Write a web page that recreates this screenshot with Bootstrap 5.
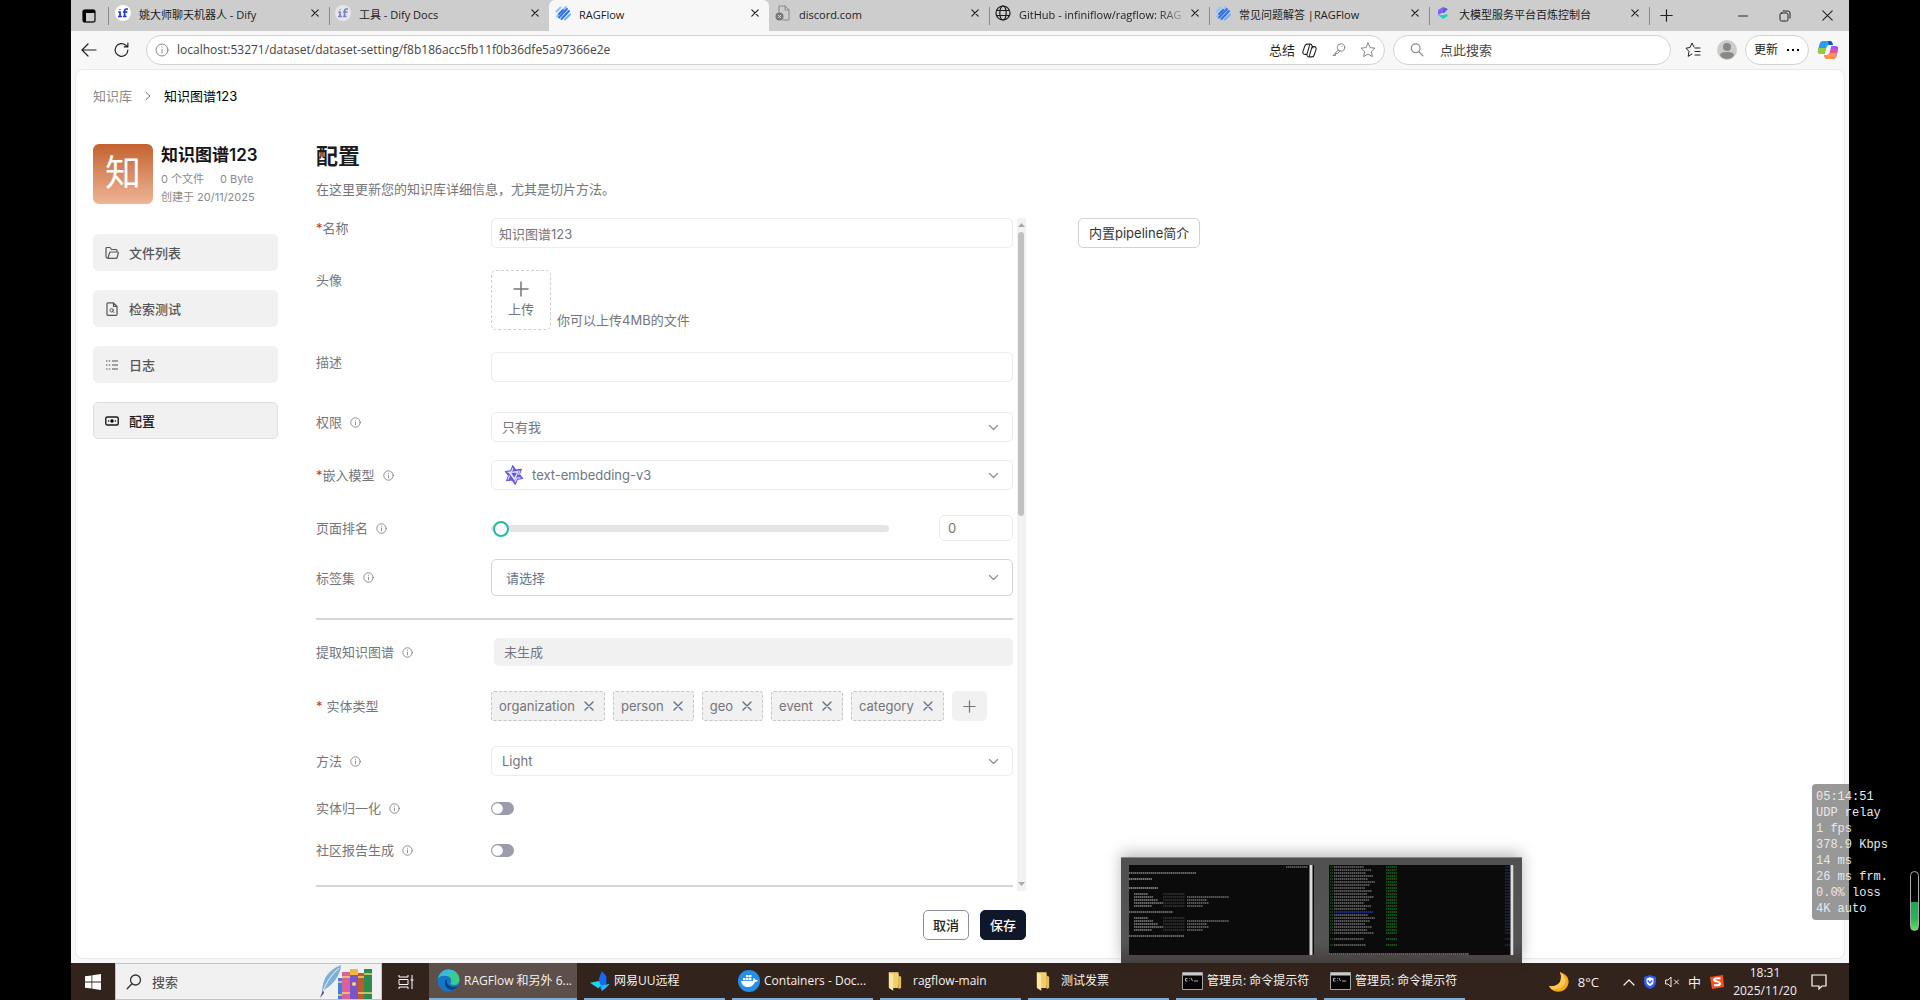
<!DOCTYPE html>
<html lang="zh-CN">
<head>
<meta charset="utf-8">
<meta name="viewport" content="width=device-width, initial-scale=1">
<title>RAGFlow</title>
<link rel="stylesheet" href="https://cdn.jsdelivr.net/npm/bootstrap@5.3.0/dist/css/bootstrap.min.css">
<style>
:root{--ui:"Open Sans","Noto Sans CJK SC",sans-serif;--app:Inter,"Noto Sans CJK SC",sans-serif;--soft:#e9ecf0;--txt:#75757a}
body{background:#000;font-family:var(--ui);font-size:12px;line-height:20px;color:#222}
.desk{margin:0 71px;min-height:100vh;background:#f7f7f7;position:relative}
svg{flex:none;display:block}
.ln{fill:none;stroke:currentColor;stroke-linecap:round;stroke-linejoin:round}
button{color:inherit;font:inherit}
.bare{background:none;border:0;padding:0;display:flex}
/* tab strip */
.tabs{background:#cdcdcd;height:31px;font-size:11px}
.tab{width:220px;height:31px;padding:0 10px 6px 6px;color:#1c1c1c;min-width:0;position:relative;flex:0 1 220px}
.tab+.tab:not(.on):not(.after)::before{content:"";position:absolute;left:0;top:7px;width:1px;height:18px;background:#888}
.tab a{color:inherit;text-decoration:none;overflow:hidden;white-space:nowrap}
.tab.on{background:#f7f7f7;border-radius:6px 6px 0 0}
.tab.fade-end a{-webkit-mask-image:linear-gradient(90deg,#000 85%,#0003);mask-image:linear-gradient(90deg,#000 85%,#0003)}
.lead-ic{width:38px;height:18px;padding-left:11px;border-right:1px solid #888;flex:none}
.newtab{height:18px;border-left:1px solid #888;padding-left:10px}
.wincap{gap:31px;padding-right:16px}
/* toolbar */
.bar{height:38px;padding:4px 10px}
.gap6{gap:6px}.gap10{gap:10px}
.pill{border:1px solid #d2d2d2;border-radius:15px;background:#fff;height:30px}
.pill input{border:0;background:none;outline:0;padding:0;color:#444;min-width:0}
.quick{width:278px}
.mute{color:#888}
.fs13{font-size:13px}
.keyic{margin:0 6px}
.favb{margin:0 16px 0 14px}
/* application page */
.page{margin:0 4px;height:890px;background:#fff;border-radius:8px;border:1px solid #e9e9e9;font-family:var(--app);font-size:13px;padding:16px 18px 0 17px;color:var(--txt)}
.crumb a{color:#8a8a8e;text-decoration:none}
.side{width:185px;padding-top:38px}
.avatar{width:60px;height:60px;border-radius:6px;background:linear-gradient(#c4622f,#efb595);color:#fff;font-size:36px;line-height:58px}
.kb{font-size:17px;line-height:22px;font-weight:600;color:#151517}
.meta{font-size:11px;line-height:18px;color:#8a8a8e}
.sidenav{gap:19px;margin-top:28px}
.sidenav a{height:37px;border-radius:5px;background:#f1f1f1;color:#55555a;text-decoration:none;padding:0 11px;gap:10px;font-weight:500;border:1px solid #f1f1f1}
.sidenav a.on{border-color:#dcdfe0;color:#1b1b1e}
.main{padding:37px 0 0 38px;width:748px}
.main h1{font-size:22px;line-height:26px;font-weight:600;color:#1d1d20;margin:0 0 10px}
.main p{margin:0 0 19px}
.fields{width:698px}
.f{display:flex;align-items:center;margin-bottom:25px}
.f>label,.f>.lb{width:175px;flex:none;display:flex;align-items:center;gap:8px}
.f.top{align-items:flex-start}
.f.m18{margin-bottom:18px}.f.m22{margin-bottom:22px}.f.m30{margin-bottom:30px}
.req::before{content:"*";color:#d03030;margin-right:-8px}
.req.sp::before{margin-right:-4px}
.ctl{height:30px;font-size:13px;line-height:20px;border:1px solid var(--soft);border-radius:5px;padding:4px 7px;color:#75757a;background-color:#fff}
.form-select.ctl{padding:4px 10px;background-size:13px;background-position:right 12px center;background-image:url("data:image/svg+xml,%3csvg xmlns='http://www.w3.org/2000/svg' viewBox='0 0 16 16'%3e%3cpath fill='none' stroke='%2388909a' stroke-width='1.5' stroke-linecap='round' stroke-linejoin='round' d='M3 5.5l5 5 5-5'/%3e%3c/svg%3e")}
.form-select.tall{height:37px;border-color:#d2d5d8;color:#64748b;padding:7px 14px}
.form-select.withic{padding-left:40px;color:#6f7785}
.over-ic{position:absolute;left:13px;top:5px}
.upload{width:60px;height:60px;border:1px dashed #cfcfcf;border-radius:5px;flex-direction:column;align-items:center;justify-content:center;gap:2px}
.hint{margin-left:6px}
.rank{appearance:none;-webkit-appearance:none;width:398px;height:16px;background:none;margin:0}
.rank::-webkit-slider-runnable-track{height:7px;border-radius:4px;background:#e5e5e5}
.rank::-webkit-slider-thumb{-webkit-appearance:none;width:16px;height:16px;border-radius:50%;border:2px solid #25b8a9;background:#fff;margin-top:-4px;margin-left:2px}
.num{width:74px;height:26px;padding:2px 8px}
.rule{height:2px;background:#d2d5da;margin-bottom:18px}
.nogen{height:28px;border-radius:5px;background:#f1f1f1;padding:4px 10px;margin-left:3px}
.tagx{height:30px;border:1px dashed #c6c6c6;border-radius:3px;background:#f1f1f1;padding:0 10px 0 7px;gap:9px;color:#75757a}
.tagx .bare{color:#64708a}
.plus{width:35px;height:30px;background:#f1f1f1;border-radius:5px;align-items:center;justify-content:center}
.form-switch.sw{padding:0;margin:0;min-height:0;line-height:0}
.sw .form-check-input{width:23px;height:13px;margin:0;float:none;border:0;background-color:#9a9bab;background-image:url("data:image/svg+xml,%3csvg xmlns='http://www.w3.org/2000/svg' viewBox='-4 -4 8 8'%3e%3ccircle r='3.3' fill='%23fff'/%3e%3c/svg%3e")}
.track{width:9px;background:#f2f2f2;margin-left:4px;padding:5px 1px;color:#aaa}
.thumb{height:284px;width:6px;border-radius:3px;background:#c1c1c1;margin:4px 0 auto}
.acts{gap:11px;padding-top:19px}
.act{height:30px;border-radius:5px;font-size:13px;line-height:20px;padding:4px 9px;border:1px solid #8b909b;background:#fff;color:#222;font-weight:500}
.act.dark{background:#0f172a;border-color:#0f172a;color:#fff}
.act.intro{border-color:#d2d2d2;color:#333;font-weight:400;padding:4px 10px;margin:112px 0 0 52px}
/* taskbar */
.task{height:37px;background:#32241d;color:#f4f1ef;margin-top:4px}
.startb{width:44px;height:37px;align-items:center;justify-content:center}
.find{width:267px;height:37px;background:#f1f1f1;border:1px solid #c4c4c4;padding-left:10px;gap:10px;color:#333}
.find input{border:0;background:none;outline:0;width:135px;font-size:13px;color:#333;padding:0}
.find input::placeholder,.pill input::placeholder{color:#444;opacity:1}
.viewb{width:47px;align-items:center;justify-content:center}
.app{width:141px;height:37px;border-bottom:2px solid #7ab0e0;gap:4px;align-items:center;padding:0 6px;white-space:nowrap}
.app.on{width:148px;background:#5d504a;padding-left:8px}
.apps{gap:7px}
.app.dirb{padding-left:8px;gap:11px}
.tray{padding-right:22px}
.clock{line-height:18px;text-align:center;width:64px;margin-right:14px}
/* layers over the desktop */
.peek{position:absolute;left:1050px;top:857px;width:401px;height:106px;background:linear-gradient(#505050,#555 80%,#44403e);border-top:1px solid #888;padding:7px 8px;box-shadow:0 -4px 14px #0004;gap:15px}
.stats{position:absolute;right:0;top:784px;width:37px;height:136px;background:#989898;border-radius:4px 0 0 4px;color:#e8e8e8;font:12px/16px "Liberation Mono",monospace;padding:5px 4px;white-space:pre}
.gauge{position:absolute;left:1910px;top:871px;width:9px;height:60px;border:1px solid #aaa;border-radius:5px;background:linear-gradient(transparent 52%,#18a850 52%,#26b556 80%,#62e05c)}
</style>
</head>
<body>
<svg width="0" height="0" class="position-absolute">
<symbol id="x" viewBox="0 0 10 10"><path class="ln" d="M1 1l8 8M9 1L1 9" stroke-width="1.4"/></symbol>
<symbol id="i" viewBox="0 0 14 14"><circle class="ln" cx="7" cy="7" r="6"/><path class="ln" d="M7 6.5V10M7 4v.2"/></symbol>
<symbol id="pl" viewBox="0 0 16 16"><path class="ln" d="M8 1v14M1 8h14" stroke-width="1.5"/></symbol>
<symbol id="rag" viewBox="0 0 16 16"><g stroke-linecap="round" stroke-width="2" fill="none"><path d="M1.500 6.500l4-4M2 11.500L11 2" stroke="#8fc2f8"/><path d="M4 12.500l8-8.500M6.500 14L14 6" stroke="#2f6fe4"/><path d="M10 14.500l5-5" stroke="#6db0f8"/><path d="M4 9l4-4" stroke="#2f6fe4"/></g></symbol>
<symbol id="dify" viewBox="0 0 16 16"><circle cx="8" cy="8" r="8" fill="#fff"/><path d="M5 4.2v.8M3.300 7H5v4.300M3 11.500h4M13 4h-1.600Q9.600 4 9.600 6v5.500M8 7h4.500M8 11.500h3.500" fill="none" stroke="#1f35e0" stroke-width="1.700"/></symbol>
<symbol id="mag" viewBox="0 0 16 16"><circle class="ln" cx="9.500" cy="6" r="5" stroke-width="1.300"/><path class="ln" d="M6 9.700L1.200 14.800" stroke-width="1.300"/></symbol>
<symbol id="magr" viewBox="0 0 16 16"><circle class="ln" cx="6.500" cy="6" r="5" stroke-width="1.300"/><path class="ln" d="M10 9.700l4.800 5.100" stroke-width="1.300"/></symbol>
<symbol id="dir" viewBox="0 0 16 22"><path d="M1 1h11v15H1z" fill="#f4d376"/><path d="M12 5l3 1v13l-3 1z" fill="#e8bd52"/><path d="M5 3h7v16H5z" fill="#f2cd68"/><path d="M1 1l5 3v18l-5-3z" fill="#fbe6a2"/></symbol>
<symbol id="cmd" viewBox="0 0 21 18"><path d="M.5.500h20v17H.5z" fill="#050505" stroke="#a5a5a5"/><path d="M1 1h19v2.500H1z" fill="#ccc"/><path d="M5.500 6.500H3.500v2.500h2M7.500 6.500v.5M7.500 8.500V9M9 6l1.500 3M12 9h4" fill="none" stroke="#ddd" stroke-width=".8"/></symbol>
<symbol id="cop" viewBox="0 0 20 20"><g class="ln" stroke-width="1.300"><path d="M7 2.500h4c1.200 0 1.700.8 2 2L14 7M7 2.500c-1.500 0-2.200 1-2.600 2.500L2.300 11c-.5 2 .3 3.500 2.200 3.500H7L10 4M13 17.500H9c-1.200 0-1.700-.8-2-2l-.3-1M13 17.500c1.500 0 2.200-1 2.600-2.500L17.700 9c.5-2-.3-3.500-2.200-3.500H13L10 16"/></g></symbol>
</svg>
<div class="desk d-flex flex-column">
  <nav class="tabs d-flex align-items-center">
    <button class="lead-ic bare align-items-center" aria-label="标签页操作"><svg width="14" height="14" viewBox="0 0 14 14"><rect class="ln" x="1" y="1" width="12" height="12" rx="2" stroke-width="1.400"/><path d="M1 1h12v3H1zM1 3h3v10H1z"/></svg></button>
    <div class="d-flex flex-grow-1 align-items-center">
    <div class="tab d-flex align-items-end gap-2"><svg width="16" height="16" class="mb-1"><use href="#dify"/></svg><a href="#" class="flex-grow-1">姚大师聊天机器人 - Dify</a><button class="bare mb-1 pb-1" aria-label="关闭"><svg width="8" height="8"><use href="#x"/></svg></button></div>
    <div class="tab d-flex align-items-end gap-2"><svg width="16" height="16" class="mb-1" opacity=".5"><use href="#dify"/></svg><a href="#" class="flex-grow-1">工具 - Dify Docs</a><button class="bare mb-1 pb-1" aria-label="关闭"><svg width="8" height="8"><use href="#x"/></svg></button></div>
    <div class="tab on d-flex align-items-end gap-2"><svg width="16" height="16" class="mb-1"><use href="#rag"/></svg><a href="#" class="flex-grow-1">RAGFlow</a><button class="bare mb-1 pb-1" aria-label="关闭"><svg width="8" height="8"><use href="#x"/></svg></button></div>
    <div class="tab after d-flex align-items-end gap-2"><svg width="16" height="16" class="mb-1 mute" viewBox="0 0 16 16"><path class="ln" d="M4 7V1h6l4 4v10H8M10 1v4h4"/><circle cx="4.500" cy="11.500" r="4" fill="#777"/><path d="M3 10l3 3M6 10l-3 3" stroke="#ddd"/></svg><a href="#" class="flex-grow-1">discord.com</a><button class="bare mb-1 pb-1" aria-label="关闭"><svg width="8" height="8"><use href="#x"/></svg></button></div>
    <div class="tab fade-end d-flex align-items-end gap-2"><svg width="16" height="16" class="mb-1" viewBox="0 0 16 16"><g class="ln" stroke-width="1.200"><circle cx="8" cy="8" r="7"/><ellipse cx="8" cy="8" rx="3.200" ry="7"/><path d="M1.500 5.500h13M1.500 10.500h13"/></g></svg><a href="#" class="flex-grow-1">GitHub - infiniflow/ragflow: RAG</a><button class="bare mb-1 pb-1" aria-label="关闭"><svg width="8" height="8"><use href="#x"/></svg></button></div>
    <div class="tab d-flex align-items-end gap-2"><svg width="16" height="16" class="mb-1"><use href="#rag"/></svg><a href="#" class="flex-grow-1">常见问题解答 |RAGFlow</a><button class="bare mb-1 pb-1" aria-label="关闭"><svg width="8" height="8"><use href="#x"/></svg></button></div>
    <div class="tab d-flex align-items-end gap-2"><svg width="16" height="16" class="mb-1" viewBox="0 0 16 16"><path d="M8 2L3 5v5l4-2z" fill="#8b5cf6"/><path d="M8 2l5 2-4 4-2 0z" fill="#5a5af0"/><path d="M3 10l5 4 5-3-1-2-4 1z" fill="#22d3c5"/></svg><a href="#" class="flex-grow-1">大模型服务平台百炼控制台</a><button class="bare mb-1 pb-1" aria-label="关闭"><svg width="8" height="8"><use href="#x"/></svg></button></div>
    <button class="bare newtab align-items-center" aria-label="新建标签页"><svg width="13" height="13"><use href="#pl"/></svg></button>
    </div>
    <div class="wincap d-flex align-items-center">
      <button class="bare" aria-label="最小化"><svg width="10" height="10" viewBox="0 0 10 10"><path class="ln" d="M.5 5h9"/></svg></button>
      <button class="bare" aria-label="还原"><svg width="12" height="12" viewBox="0 0 12 12"><rect class="ln" x="1" y="3" width="8" height="8" rx="1.500"/><path class="ln" d="M4 1h5q2 0 2 2v5"/></svg></button>
      <button class="bare" aria-label="关闭窗口"><svg width="11" height="11" viewBox="0 0 10 10"><path class="ln" d="M.7.700l8.600 8.600M9.300.700L.7 9.300"/></svg></button>
    </div>
  </nav>
  <div class="bar d-flex align-items-center">
    <button class="bare" aria-label="返回"><svg width="16" height="16" viewBox="0 0 16 16"><path class="ln" d="M15 8H1M7 2L1 8l6 6" stroke-width="1.200"/></svg></button>
    <button class="bare ms-3 me-3" aria-label="刷新"><svg width="17" height="18" viewBox="0 0 16 16"><path class="ln" d="M14 8a6 6 0 1 1-2-4.500L14 5M14 1.500V5h-3.500" stroke-width="1.100"/></svg></button>
    <div class="pill d-flex align-items-center flex-grow-1 px-2 gap-2">
      <svg width="14" height="14" class="mute"><use href="#i"/></svg>
      <input class="flex-grow-1" aria-label="地址" value="localhost:53271/dataset/dataset-setting/f8b186acc5fb11f0b36dfe5a97366e2e">
      <button class="bare fs13 gap6 align-items-center">总结 <svg width="17" height="17"><use href="#cop"/></svg></button>
      <svg width="14" height="14" viewBox="0 0 14 14" class="mute keyic"><circle class="ln" cx="9" cy="4.500" r="3.700"/><path class="ln" d="M6.200 7L1 12.500h2.500v-2h2L8 8M10 3.500v.1"/></svg>
      <svg width="16" height="16" viewBox="0 0 16 16" class="mute"><path class="ln" d="M8 1l2.100 4.600 5 .6-3.700 3.400 1 5L8 12.100l-4.400 2.500 1-5L.9 6.200l5-.6z"/></svg>
    </div>
    <div class="pill quick d-flex align-items-center ms-2 px-3 gap-3"><svg width="14" height="14" class="mute"><use href="#magr"/></svg><input class="fs13" aria-label="搜索" placeholder="点此搜索"></div>
    <button class="bare favb" aria-label="收藏夹"><svg width="16" height="16" viewBox="0 0 16 16"><path class="ln" d="M9 5L7 1 5 5.500l-4 .7 3 3.200-.8 5L7 12M10 6h5M10 9.500h5M10 13h5"/></svg></button>
    <div class="d-flex align-items-center gap-2">
    <svg width="20" height="20" viewBox="0 0 20 20"><circle cx="10" cy="10" r="10" fill="#cfccc8"/><circle cx="10" cy="7" r="4" fill="#888"/><path d="M3 15q0-3 7-3t7 3q-2 4-7 4t-7-4" fill="#888"/></svg>
    <button class="pill px-2 d-flex align-items-center gap-2">更新 <svg width="14" height="4" viewBox="0 0 14 4"><path d="M1 1h2v2H1zM6 1h2v2H6zM11 1h2v2h-2z"/></svg></button>
    <svg width="22" height="20" viewBox="0 0 22 20"><path d="M6 1h6q2 0 2.500 2L15 5h-3q-2 0-2.500 2L7.500 14H4q-4 0-3-4l1.500-6Q3.500 1 6 1z" fill="#2a9df0"/><path d="M1.500 8L9 8l-1.500 6H4q-4 0-3-4z" fill="#9bc83c"/><path d="M11 1h2q2 0 2.500 2l.5 2h-4z" fill="#1650c8"/><path d="M16 19h-6q-2 0-2.500-2L7 15h3q2 0 2.500-2L14.500 6H18q4 0 3 4l-1.500 6q-1 3-3.500 3z" fill="#e8509a"/><path d="M7 15h3q2 0 2.500-2h7.500l-1 3q-1 3-3 3h-6q-2 0-2.500-2z" fill="#ff9448"/><path d="M14.500 6H18q3 0 3 3h-7.400z" fill="#9c5be8"/></svg>
    </div>
  </div>

  <main class="page">
    <nav class="crumb d-flex align-items-center gap10"><a href="#">知识库</a><svg width="12" height="12" viewBox="0 0 12 12"><path class="ln" d="M4 2.500L8 6 4 9.500"/></svg><span class="text-black">知识图谱123</span></nav>
    <div class="d-flex align-items-start">
      <aside class="side">
        <div class="d-flex gap-2">
          <div class="avatar text-center">知</div>
          <div><div class="kb">知识图谱123</div><div class="meta d-flex gap-3 mt-1"><span>0 个文件</span><span>0 Byte</span></div><div class="meta">创建于 20/11/2025</div></div>
        </div>
        <nav class="sidenav d-flex flex-column">
          <a href="#" class="d-flex align-items-center"><svg width="14" height="14" viewBox="0 0 14 14"><path class="ln" d="M1 10.500V2.500Q1 1.500 2 1.500H5l1.500 2H11q1 0 1 1V6M3 12.300h8q.9 0 1.100-.8L13.300 7Q13.400 6 12.500 6H5.500q-.8 0-1 .8L3 12Q1 12.500 1 10.500" stroke-width="1.200"/></svg>文件列表</a>
          <a href="#" class="d-flex align-items-center"><svg width="14" height="14" viewBox="0 0 14 14"><path class="ln" d="M3 .8h5.500L12 4.300v8q0 1-1 1H3q-1 0-1-1v-10.500q0-1 1-1zM8.500 1v3.300H12" stroke-width="1.200"/><circle class="ln" cx="6.700" cy="8.300" r="1.700"/><path class="ln" d="M8 9.600l1 1"/></svg>检索测试</a>
          <a href="#" class="d-flex align-items-center"><svg width="14" height="14" viewBox="0 0 14 14"><path d="M1 3h1.500M3.800 3h1.500M7 3h6M1 7h1.500M3.800 7h1.500M7 7h6M1 11h1.500M3.800 11h1.500M7 11h6" stroke="currentColor" stroke-width="1.200"/></svg>日志</a>
          <a href="#" class="on d-flex align-items-center" aria-current="page"><svg width="14" height="14" viewBox="0 0 14 14"><rect class="ln" x=".8" y="3" width="12.400" height="8" rx="1.500" stroke-width="1.400"/><circle cx="7" cy="7" r="1.700"/><path d="M3 7h1.200M9.800 7H11" stroke="currentColor" stroke-width="1.300"/></svg>配置</a>
        </nav>
      </aside>
      <section class="main">
        <h1>配置</h1>
        <p>在这里更新您的知识库详细信息，尤其是切片方法。</p>
        <form>
        <div class="d-flex">
          <div class="fields">
            <div class="f top m22"><label for="nm" class="req">名称</label><input id="nm" class="form-control ctl" value="知识图谱123"></div>
            <div class="f top m22"><span class="lb">头像</span><button type="button" class="bare upload"><svg width="16" height="16"><use href="#pl"/></svg>上传</button><span class="hint align-self-end">你可以上传4MB的文件</span></div>
            <div class="f top m30"><label for="ds">描述</label><input id="ds" class="form-control ctl"></div>
            <div class="f top m18"><label for="pm">权限 <svg width="11" height="11"><use href="#i"/></svg></label><select id="pm" class="form-select ctl"><option>只有我</option></select></div>
            <div class="f"><label for="em" class="req">嵌入模型 <svg width="11" height="11"><use href="#i"/></svg></label><div class="position-relative flex-grow-1"><select id="em" class="form-select ctl withic"><option>text-embedding-v3</option></select><svg class="over-ic" width="20" height="20" viewBox="0 0 20 20"><g transform="rotate(-8 10 10)"><path d="M10 .5l2.700 4.800h5.500L15.500 10l2.700 4.700h-5.500L10 19.500l-2.700-4.800H1.800L4.500 10 1.800 5.300h5.500z" fill="#6558e0" stroke="#6558e0" stroke-linejoin="round"/><path d="M4.700 6.500h10.600L10 15.800z" fill="#e9e6ff"/><path d="M10 2.800L8 6.500M16.500 6.500L14.500 10.500M16 13.500h-4.500M10 17.200l2-3.500M3.500 13.700l2-3.700M4 6.500h4" stroke="#e9e6ff" stroke-width="1.100" fill="none"/></g><path d="M7.300 7.800h5.600L10.200 12.800z" fill="#6558e0"/></svg></div></div>
            <div class="f m18"><label for="rk">页面排名 <svg width="11" height="11"><use href="#i"/></svg></label><input id="rk" type="range" class="rank" min="0" max="100" value="0"><input class="form-control ctl num ms-auto" aria-label="页面排名数值" value="0"></div>
            <div class="f m22"><label for="tg">标签集 <svg width="11" height="11"><use href="#i"/></svg></label><select id="tg" class="form-select ctl tall"><option>请选择</option></select></div>
            <div class="rule"></div>
            <div class="f"><span class="lb">提取知识图谱 <svg width="11" height="11"><use href="#i"/></svg></span><div class="nogen flex-grow-1">未生成</div></div>
            <div class="f"><span class="lb req sp">实体类型</span><div class="d-flex gap-2">
              <span class="tagx d-flex align-items-center">organization<button type="button" class="bare" aria-label="删除"><svg width="10" height="10"><use href="#x"/></svg></button></span>
              <span class="tagx d-flex align-items-center">person<button type="button" class="bare" aria-label="删除"><svg width="10" height="10"><use href="#x"/></svg></button></span>
              <span class="tagx d-flex align-items-center">geo<button type="button" class="bare" aria-label="删除"><svg width="10" height="10"><use href="#x"/></svg></button></span>
              <span class="tagx d-flex align-items-center">event<button type="button" class="bare" aria-label="删除"><svg width="10" height="10"><use href="#x"/></svg></button></span>
              <span class="tagx d-flex align-items-center">category<button type="button" class="bare" aria-label="删除"><svg width="10" height="10"><use href="#x"/></svg></button></span>
              <button type="button" class="bare plus" aria-label="添加"><svg width="13" height="13"><use href="#pl"/></svg></button></div></div>
            <div class="f m22"><label for="mt">方法 <svg width="11" height="11"><use href="#i"/></svg></label><select id="mt" class="form-select ctl"><option>Light</option></select></div>
            <div class="f m22"><label for="s1">实体归一化 <svg width="11" height="11"><use href="#i"/></svg></label><div class="form-check form-switch sw"><input id="s1" class="form-check-input" type="checkbox" role="switch"></div></div>
            <div class="f"><label for="s2">社区报告生成 <svg width="11" height="11"><use href="#i"/></svg></label><div class="form-check form-switch sw"><input id="s2" class="form-check-input" type="checkbox" role="switch"></div></div>
            <div class="rule mb-1"></div>
          </div>
          <div class="track d-flex flex-column" aria-hidden="true"><svg width="7" height="5" viewBox="0 0 7 5"><path d="M3.500 0L7 4H0z" fill="#aaa"/></svg><div class="thumb"></div><svg width="7" height="5" viewBox="0 0 7 5"><path d="M3.500 5L7 1H0z" fill="#aaa"/></svg></div>
        </div>
        <div class="acts d-flex justify-content-end"><button type="button" class="act">取消</button><button type="submit" class="act dark">保存</button></div>
        </form>
      </section>
      <button class="act intro">内置pipeline简介</button>
    </div>
  </main>

  <footer class="task d-flex">
    <button class="bare startb" aria-label="开始"><svg width="16" height="16" viewBox="0 0 16 16"><path fill="#fff" d="M0 2.300L6.500 1.400v6.200H0zM7.300 1.300L16 0v7.600H7.300zM0 8.400h6.500v6.200L0 13.700zM7.300 8.400H16V16l-8.700-1.300z"/></svg></button>
    <div class="find d-flex align-items-center"><svg width="16" height="16"><use href="#mag"/></svg><input aria-label="搜索" placeholder="搜索">
      <svg width="54" height="35" viewBox="0 0 54 35" class="ms-auto me-2"><path d="M3 29Q3 8 22 1 21 16 5 26z" fill="#7fb0d8"/><path d="M2 32Q8 14 20 4" stroke="#e6f2fb" fill="none"/><path d="M1 34l3-8 1 3z" fill="#5b3a8c"/><path d="M19 14h5v21h-5z" fill="#3e7fe0"/><path d="M23 8h8v27h-8z" fill="#d8629c"/><path d="M31 5h8v30h-8z" fill="#7a55c8"/><path d="M31 5h8v6h-8z" fill="#f0b840"/><path d="M39 9h7v26h-7z" fill="#c05a2a"/><path d="M45 5h8v30h-8z" fill="#2c8b50"/><path d="M23 13h8M23 29h8M39 13h6M39 29h6M45 10h8M45 29h8M19 18h4M19 31h4" stroke="#f5d470" stroke-width="1.500"/><circle cx="35" cy="20" r="2" fill="#f5d470"/></svg></div>
    <button class="bare viewb" aria-label="任务视图"><svg width="16" height="16" viewBox="0 0 16 16"><path d="M1 1v2h9V1M1 15v-2h9v2M1 5.500h9v5H1zM14 1v14M12.500 6h3" fill="none" stroke="#fff"/></svg></button>
    <div class="apps d-flex">
      <button class="bare app on"><svg width="23" height="23" viewBox="0 0 23 23"><circle cx="11.500" cy="11.500" r="11" fill="#1576c8"/><path d="M1 9Q4 0 12 .5 22 1 22.500 11q0 5-6 5-4 0-2.500-3Q15 8 10 7 4 6 1 9z" fill="#3ccb8a"/><path d="M1 9Q4 1 11 .5q5 0 8 4-7-3-11 2Q3 6 1 9z" fill="#35b8e8"/><path d="M8 12q-1 7 6 9 4 0 7-4-4 2-8 0-4-2-3-7z" fill="#0c3f86"/></svg>RAGFlow 和另外 6...</button>
      <button class="bare app"><svg width="20" height="22" viewBox="0 0 22 22"><path d="M13 0l5 6v8l-5 8-3-6V8z" fill="#1469f5"/><path d="M0 13l10-2 2 5-3 3z" fill="#19d8ea"/><path d="M12 16l10-2-5 5-4 3z" fill="#2bb6fa"/></svg>网易UU远程</button>
      <button class="bare app"><svg width="22" height="22" viewBox="0 0 22 22"><circle cx="11" cy="11" r="11" fill="#2390ea"/><path d="M3 11h12q1-2 0-3 2 0 2.500 2 1.500-.4 2.500.3-.8 1.500-3 1.700-2 5-7 5-6 0-7-6zM5 8h2.500v2.300H5zM8 8h2.500v2.300H8zM11 8h2.500v2.300H11zM8 5h2.500v2.300H8zM11 5h2.500v2.300H11z" fill="#fff"/></svg>Containers - Doc...</button>
      <button class="bare app dirb"><svg width="14" height="20"><use href="#dir"/></svg>ragflow-main</button>
      <button class="bare app dirb"><svg width="14" height="20"><use href="#dir"/></svg>测试发票</button>
      <button class="bare app"><svg width="21" height="18"><use href="#cmd"/></svg>管理员: 命令提示符</button>
      <button class="bare app"><svg width="21" height="18"><use href="#cmd"/></svg>管理员: 命令提示符</button>
    </div>
    <div class="tray d-flex align-items-center ms-auto">
      <svg width="22" height="22" viewBox="0 0 22 22" class="me-2"><path d="M12 1q11 4 8 13-4 9-14 6-4-2-5-5 8 1 11-4 2-5 0-10z" fill="#f5a623"/><path d="M12 1q7 5 5 12-4 6-13 5-2-1-3-3 8 1 11-4 2-5 0-10z" fill="#ffc94d"/></svg><span class="fs13 me-4">8°C</span>
      <svg width="12" height="8" viewBox="0 0 12 8"><path class="ln" d="M1 7l5-5 5 5" stroke-width="1.200"/></svg>
      <svg width="14" height="14" viewBox="0 0 14 14" class="ms-2 me-1"><path d="M7 0l6 2v5q0 5-6 7-6-2-6-7V2z" fill="#2d5bf0"/><path d="M7 2.300l3.500 1.200v3.500q0 2.500-3.500 4-3.500-1.500-3.500-4V3.500z" fill="#fff"/><path d="M4.800 5.500L7 8l2.200-2.500" fill="none" stroke="#2d5bf0" stroke-width="1.300"/></svg>
      <svg width="15" height="12" viewBox="0 0 15 12" class="ms-1 me-2"><path class="ln" d="M1 4h2l3-3v10L3 8H1zM9.500 4l4 4M13.500 4l-4 4"/></svg>
      <span class="fs13 me-2">中</span>
      <svg width="16" height="16" viewBox="0 0 16 16" class="me-2"><path d="M1 3l13-2 1 12-12 2z" fill="#f4511e"/><path d="M11.500 4.500Q6 3.500 5 5.500 5 7 8 7.500t3 2.500q-1 2-6 1" fill="none" stroke="#fff" stroke-width="2"/></svg>
      <div class="clock"><div>18:31</div><div>2025/11/20</div></div>
      <svg width="16" height="16" viewBox="0 0 16 16"><path d="M1 1h14v11H11l-3 3v-3H1z" fill="none" stroke="#fff" stroke-width="1.200"/></svg>
    </div>
  </footer>

  <div class="peek d-flex"><svg width="185" height="90" id="t1"><rect width="185" height="90" fill="#0b0b0b"/><path d="M182 0v90" stroke="#ddd" stroke-width="3"/></svg><svg width="185" height="90" id="t2"><rect width="185" height="90" fill="#0b0b0b"/><path d="M183 0v90" stroke="#ddd" stroke-width="3"/></svg></div>
  <div class="stats">05:14:51
UDP relay
1 fps
378.9 Kbps
14 ms
26 ms frm.
0.0% loss
4K auto</div>
</div>
<div class="gauge"></div>
<script src="https://cdn.jsdelivr.net/npm/bootstrap@5.3.0/dist/js/bootstrap.bundle.min.js"></script>
<script>
// console miniatures: each entry is [x, y, width, colour]
function rows(id, list) {
  const el = document.getElementById(id);
  for (const [x, y, w, c] of list) {
    const p = document.createElementNS('http://www.w3.org/2000/svg', 'path');
    p.setAttribute('d', `M${x} ${y}h${w}`);
    p.setAttribute('stroke', c);
    p.setAttribute('stroke-width', 2);
    p.setAttribute('stroke-dasharray', '1 .5 2 .6 1.500 .4');
    el.appendChild(p);
  }
}
const a = [[157, 2, 22, '#555'], [0, 8, 67, '#666'], [0, 14, 23, '#777'], [0, 23, 29, '#777'], [0, 47, 44, '#666'], [0, 71, 55, '#666']];
for (const top of [29, 53]) for (let i = 0; i < 5; i++) {
  a.push([5, top + i * 3, 14 + i * 5 % 16, '#666'], [34, top + i * 3, 22, '#2a2a2a']);
  if (i) a.push([58, top + i * 3, [0, 42, 20, 22, 16][i], '#555']);
}
rows('t1', a);
const b = [[0, 89, 140, '#666']];
for (let i = 0; i < 27; i++) {
  if (i === 23 || i === 25) continue;
  b.push([1, 2 + i * 3, 3, '#143a16'], [5, 2 + i * 3, 30 + i * 7 % 12, i === 15 ? '#203080' : '#555'], [57, 2 + i * 3, 11, '#14501a'], [176, 2 + i * 3, 5, '#182458']);
}
rows('t2', b);
</script>
</body>
</html>
